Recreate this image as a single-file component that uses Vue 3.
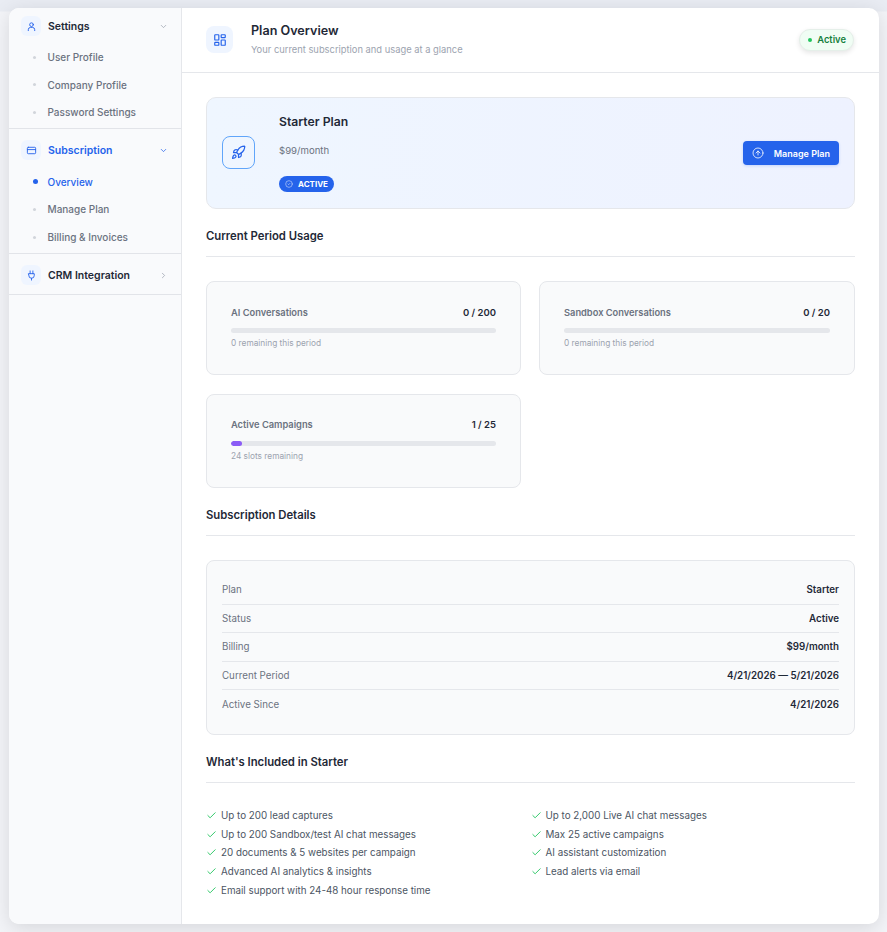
<template>
  <div class="page">
    <div class="shell">
      <aside class="sidebar">
        <div v-for="group in nav" :key="group.name" class="group">
          <div class="group-head" :class="{ current: group.current }">
            <span class="group-icon">
              <svg v-if="group.icon === 'user'" viewBox="0 0 24 24"><circle cx="12" cy="8" r="4" /><path d="M5 21v-2a5 5 0 0 1 5-5h4a5 5 0 0 1 5 5v2" /></svg>
              <svg v-else-if="group.icon === 'card'" viewBox="0 0 24 24"><rect x="3" y="5" width="18" height="14" rx="2" /><path d="M3 10h18" /></svg>
              <svg v-else viewBox="0 0 24 24"><path d="M9 2v6M15 2v6M6 8h12v4a6 6 0 0 1-12 0zM12 18v4" /></svg>
            </span>
            <span class="group-name">{{ group.name }}</span>
            <svg class="chev" :class="{ closed: !group.items }" viewBox="0 0 24 24"><path d="m6 9 6 6 6-6" /></svg>
          </div>
          <div v-if="group.items" class="sub-list">
            <div v-for="item in group.items" :key="item" class="sub-item" :class="{ current: item === 'Overview' }">
              <span class="dot"></span>{{ item }}
            </div>
          </div>
        </div>
      </aside>

      <main class="main">
        <header class="top">
          <span class="top-icon">
            <svg viewBox="0 0 24 24"><rect x="3" y="3" width="7" height="9" rx="1" /><rect x="14" y="3" width="7" height="5" rx="1" /><rect x="14" y="12" width="7" height="9" rx="1" /><rect x="3" y="16" width="7" height="5" rx="1" /></svg>
          </span>
          <div class="top-text">
            <div class="top-title">Plan Overview</div>
            <div class="top-sub">Your current subscription and usage at a glance</div>
          </div>
          <span class="status"><i></i>Active</span>
        </header>

        <div class="content">
          <section class="plan">
            <span class="plan-icon">
              <svg viewBox="0 0 24 24"><path d="M4.5 16.5c-1.5 1.26-2 5-2 5s3.74-.5 5-2c.71-.84.7-2.13-.09-2.91a2.18 2.18 0 0 0-2.91-.09z" /><path d="m12 15-3-3a22 22 0 0 1 2-3.95A12.88 12.88 0 0 1 22 2c0 2.72-.78 7.5-6 11a22.35 22.35 0 0 1-4 2z" /><path d="M9 12H4s.55-3.03 2-4c1.62-1.08 5 0 5 0M12 15v5s3.03-.55 4-2c1.08-1.62 0-5 0-5" /></svg>
            </span>
            <div class="plan-text">
              <div class="plan-name">Starter Plan</div>
              <div class="plan-price">$99/month</div>
              <span class="plan-badge">
                <svg viewBox="0 0 24 24"><circle cx="12" cy="12" r="10" /><path d="m9 12 2 2 4-4" /></svg>
                ACTIVE
              </span>
            </div>
            <button class="manage">
              <svg viewBox="0 0 24 24"><circle cx="12" cy="12" r="10" /><path d="m16 12-4-4-4 4M12 16V8" /></svg>
              Manage Plan
            </button>
          </section>

          <h2 class="section-title">Current Period Usage</h2>
          <div class="usage-grid">
            <div v-for="u in usage" :key="u.label" class="usage-card">
              <div class="usage-row">
                <span class="usage-label">{{ u.label }}</span>
                <span class="usage-value">{{ u.used }} / {{ u.limit }}</span>
              </div>
              <div class="track"><div class="fill" :style="{ width: (u.used / u.limit) * 100 + '%' }"></div></div>
              <div class="usage-note">{{ u.note }}</div>
            </div>
          </div>

          <h2 class="section-title">Subscription Details</h2>
          <div class="details">
            <div v-for="d in details" :key="d[0]" class="detail-row">
              <span class="detail-key">{{ d[0] }}</span>
              <span class="detail-val">{{ d[1] }}</span>
            </div>
          </div>

          <h2 class="section-title">What's Included in Starter</h2>
          <ul class="features">
            <li v-for="f in features" :key="f">
              <svg viewBox="0 0 24 24"><path d="M20 6 9 17l-5-5" /></svg>{{ f }}
            </li>
          </ul>
        </div>
      </main>
    </div>
  </div>
</template>

<script setup>
const nav = [
  { name: 'Settings', icon: 'user', items: ['User Profile', 'Company Profile', 'Password Settings'] },
  { name: 'Subscription', icon: 'card', current: true, items: ['Overview', 'Manage Plan', 'Billing & Invoices'] },
  { name: 'CRM Integration', icon: 'plug' }
]

const usage = [
  { label: 'AI Conversations', used: 0, limit: 200, note: '0 remaining this period' },
  { label: 'Sandbox Conversations', used: 0, limit: 20, note: '0 remaining this period' },
  { label: 'Active Campaigns', used: 1, limit: 25, note: '24 slots remaining' }
]

const details = [
  ['Plan', 'Starter'],
  ['Status', 'Active'],
  ['Billing', '$99/month'],
  ['Current Period', '4/21/2026 — 5/21/2026'],
  ['Active Since', '4/21/2026']
]

// two columns, filled left to right
const features = [
  'Up to 200 lead captures',
  'Up to 2,000 Live AI chat messages',
  'Up to 200 Sandbox/test AI chat messages',
  'Max 25 active campaigns',
  '20 documents & 5 websites per campaign',
  'AI assistant customization',
  'Advanced AI analytics & insights',
  'Lead alerts via email',
  'Email support with 24-48 hour response time'
]
</script>

<style>
html,
body {
  margin: 0;
  background: #f3f4f8;
}
</style>

<style scoped>
.page {
  height: 932px;
  box-sizing: border-box;
  padding: 8px 8px 8px 9px;
  background: linear-gradient(180deg, #e9ecf3 0, #e9ecf3 11px, #f3f4f8 12px);
  font-family: Inter, "Liberation Sans", sans-serif;
  overflow: hidden;
}

.shell {
  display: flex;
  height: 916px;
  background: #fff;
  border-radius: 10px;
  overflow: hidden;
  box-shadow: 0 4px 20px rgba(0, 0, 0, 0.12);
}

svg {
  fill: none;
  stroke: currentColor;
  stroke-width: 2;
  stroke-linecap: round;
  stroke-linejoin: round;
  flex: none;
}

/* sidebar */
.sidebar {
  width: 173px;
  flex: none;
  box-sizing: border-box;
  background: #f9fafc;
  border-right: 1px solid #e5e7eb;
}

.group {
  border-bottom: 1px solid #e2e4e9;
}

.group-head {
  display: flex;
  align-items: center;
  height: 37px;
  padding: 0 12px;
  color: #1f2937;
  font-size: 10.5px;
  font-weight: 600;
}

.group:first-child .group-head {
  height: 36px;
}

.group:not(:first-child) .group-head {
  margin-top: 3px;
}

.group-head.current {
  color: #2563eb;
}

.group-icon {
  width: 20px;
  height: 20px;
  border-radius: 6px;
  background: #eff5ff;
  color: #2563eb;
  display: flex;
  align-items: center;
  justify-content: center;
  margin-right: 7px;
}

.group-icon svg {
  width: 11px;
  height: 11px;
}

.group-name {
  flex: 1;
}

.chev {
  width: 9px;
  height: 9px;
  color: #9ca3af;
  margin-right: 1px;
}

.current .chev {
  color: #2563eb;
}

.chev.closed {
  transform: rotate(-90deg);
}

.sub-list {
  margin-top: -1px;
  padding-bottom: 1.9px;
}

.group:first-child .sub-list {
  margin-top: -0.8px;
  padding-bottom: 1.7px;
}

.sub-item {
  display: flex;
  align-items: center;
  height: 27.7px;
  padding-left: 24px;
  font-size: 10px;
  font-weight: 500;
  color: #6b7280;
}

.sub-item.current {
  color: #2563eb;
}

.dot {
  width: 3px;
  height: 3px;
  border-radius: 50%;
  background: #d1d5db;
  margin-right: 11.5px;
}

.sub-item.current .dot {
  width: 5px;
  height: 5px;
  margin-right: 9.5px;
  background: #2563eb;
}

/* main */
.main {
  flex: 1;
  min-width: 0;
}

.top {
  display: flex;
  align-items: center;
  height: 65px;
  box-sizing: border-box;
  padding: 0 24px 1px;
  border-bottom: 1px solid #e5e7eb;
}

.top-icon {
  width: 27px;
  height: 27px;
  border-radius: 8px;
  background: #eff5ff;
  color: #2563eb;
  display: flex;
  align-items: center;
  justify-content: center;
  margin-right: 18px;
}

.top-icon svg {
  width: 14px;
  height: 14px;
}

.top-text {
  flex: 1;
}

.top-title {
  font-size: 12.6px;
  font-weight: 600;
  color: #1f2937;
  line-height: 16px;
}

.top-sub {
  font-size: 9.35px;
  color: #9ca3af;
  line-height: 13px;
  margin-top: 4px;
}

.status {
  display: flex;
  align-items: center;
  height: 22px;
  box-sizing: border-box;
  padding: 0 7px 0 8px;
  margin-right: 1px;
  border-radius: 11px;
  background: #f0fdf4;
  border: 1px solid #e5efe9;
  box-shadow: 0 2px 5px rgba(0, 0, 0, 0.1);
  color: #15803d;
  font-size: 9.4px;
  font-weight: 600;
}

.status i {
  width: 4px;
  height: 4px;
  border-radius: 50%;
  background: #22c55e;
  margin-right: 5px;
}

.content {
  padding: 24px 24px 0;
}

.plan {
  display: flex;
  align-items: center;
  height: 112px;
  box-sizing: border-box;
  padding: 0 15px;
  border: 1px solid #e5e7eb;
  border-radius: 10px;
  background: linear-gradient(90deg, #eff6ff, #eef2ff);
}

.plan-icon {
  width: 33px;
  height: 33px;
  box-sizing: border-box;
  border: 1px solid #60a5fa;
  border-radius: 8px;
  color: #2563eb;
  display: flex;
  align-items: center;
  justify-content: center;
  margin: -1px 24px 0 0;
}

.plan-icon svg {
  width: 15px;
  height: 15px;
}

.plan-text {
  flex: 1;
  display: flex;
  flex-direction: column;
  align-items: flex-start;
}

.plan-name {
  font-size: 12.2px;
  font-weight: 600;
  color: #1f2937;
  line-height: 14px;
}

.plan-price {
  font-size: 9.6px;
  color: #6b7280;
  line-height: 14px;
  margin-top: 15px;
}

.plan-badge {
  display: flex;
  align-items: center;
  height: 16px;
  padding: 0 6px;
  margin-top: 18px;
  border-radius: 8px;
  background: #2563eb;
  color: #fff;
  font-size: 8px;
  font-weight: 700;
}

.plan-badge svg {
  width: 8px;
  height: 8px;
  margin-right: 5px;
  opacity: 0.7;
}

.manage {
  display: flex;
  align-items: center;
  height: 24px;
  padding: 0 9px;
  border: 0;
  border-radius: 4px;
  background: #2563eb;
  color: #fff;
  font: 600 9px Inter, "Liberation Sans", sans-serif;
  box-shadow: 0 1px 3px rgba(37, 99, 235, 0.2);
}

.manage svg {
  width: 12px;
  height: 12px;
  margin-right: 10px;
  stroke-width: 1.6;
}

.section-title {
  margin: 0;
  padding: 21px 0 13px;
  font-size: 11.3px;
  line-height: 13px;
  font-weight: 600;
  color: #1f2937;
  border-bottom: 1px solid #e5e7eb;
}

.usage-grid {
  display: grid;
  grid-template-columns: 315fr 316fr;
  column-gap: 18px;
  row-gap: 18.6px;
  margin-top: 24px;
}

.usage-card {
  height: 94.2px;
  box-sizing: border-box;
  padding: 23px 24px 0;
  border: 1px solid #e5e7eb;
  border-radius: 8px;
  background: #f9fafb;
}

.usage-row {
  display: flex;
  justify-content: space-between;
  align-items: center;
  height: 14px;
}

.usage-label {
  font-size: 9.3px;
  font-weight: 600;
  color: #6b7280;
}

.usage-value {
  font-size: 9.5px;
  font-weight: 600;
  color: #1f2937;
}

.track {
  height: 5px;
  margin-top: 9px;
  border-radius: 3px;
  background: #e5e7eb;
  overflow: hidden;
}

.fill {
  height: 100%;
  border-radius: 3px;
  background: #8b5cf6;
}

.usage-note {
  margin-top: 4px;
  font-size: 8.3px;
  line-height: 12px;
  color: #9ca3af;
}

.details {
  margin-top: 24px;
  padding: 15px;
  border: 1px solid #e5e7eb;
  border-radius: 8px;
  background: #f9fafb;
}

.detail-row {
  display: flex;
  justify-content: space-between;
  align-items: center;
  height: 28.6px;
  box-sizing: border-box;
  font-size: 9.75px;
  border-bottom: 1px solid #e5e7eb;
}

.detail-row:last-child {
  border-bottom: 0;
}

.detail-key {
  color: #6b7280;
}

.detail-val {
  color: #1f2937;
  font-weight: 600;
}

.features {
  list-style: none;
  margin: 23px 0 0;
  padding: 0;
  display: grid;
  grid-template-columns: 324.5px 1fr;
  grid-auto-rows: 18.75px;
}

.features li {
  display: flex;
  align-items: center;
  font-size: 9.8px;
  color: #4b5563;
}

.features svg {
  width: 11px;
  height: 11px;
  margin-right: 4px;
  color: #22c55e;
}
</style>
